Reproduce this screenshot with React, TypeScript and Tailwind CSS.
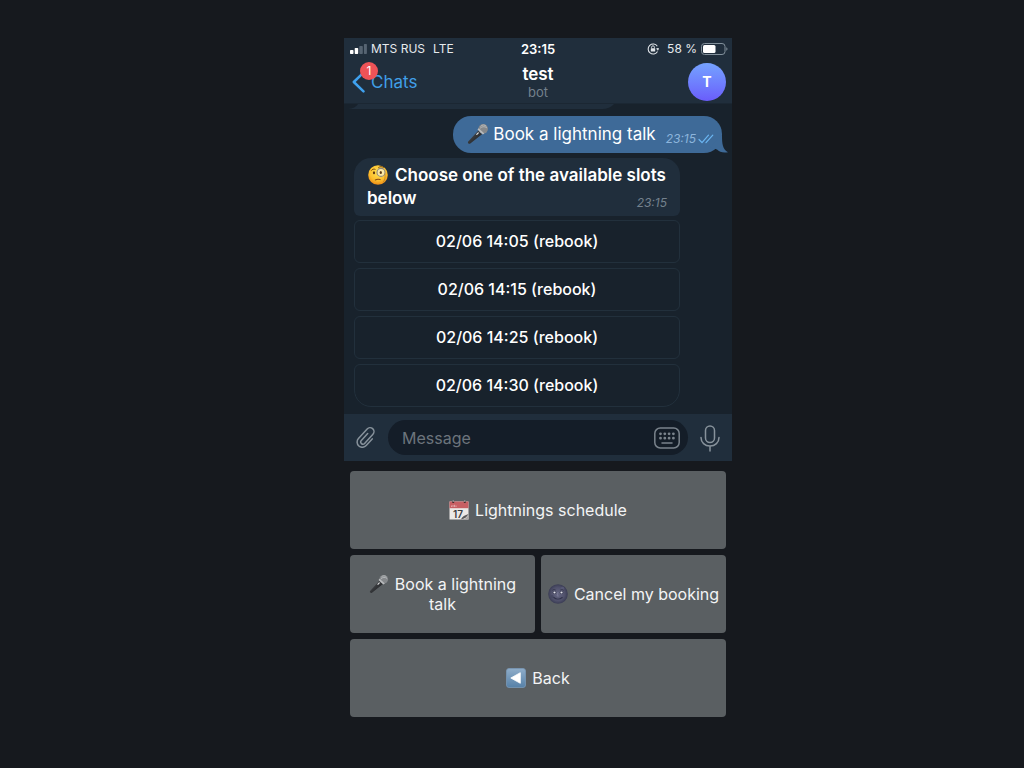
import React from 'react';

const slots = ['02/06 14:05', '02/06 14:15', '02/06 14:25', '02/06 14:30'];

function MicEmoji({ id, className }: { id: string; className: string }) {
  return (
    <svg viewBox="0 0 22 22" className={className} aria-hidden="true">
      <defs>
        <linearGradient id={id} x1="0" y1="0" x2="1" y2="1">
          <stop offset="0" stopColor="#6d7073" />
          <stop offset="0.45" stopColor="#36383b" />
          <stop offset="1" stopColor="#17191c" />
        </linearGradient>
      </defs>
      <path d="M11.400 7.400 1.200 18.600c-.5.6-.3 1.300.2 1.800s1.300.6 1.900.1L15 11.200z" fill={`url(#${id})`} />
      <circle cx="16.200" cy="5.800" r="4.800" fill="#85888b" />
      <path d="M13.500 3.500c1.500-2 4.500-2 5.800-.1M12.800 5.600c2-2.200 5-2.500 7.200-.6" stroke="#c3c5c7" strokeWidth="0.800" fill="none" />
      <path d="m11.600 5.200 5.800 5.200-1.500 1.100-5.400-4.900z" fill="#b9bbbd" />
      <path d="m9.800 11.300 1.500-1.500" stroke="#e4e5e6" strokeWidth="1.200" strokeLinecap="round" />
    </svg>
  );
}

function MonocleEmoji() {
  return (
    <svg viewBox="0 0 22 22" className="size-[22px] shrink-0" aria-hidden="true">
      <defs>
        <radialGradient id="face" cx="0.5" cy="0.35" r="0.65">
          <stop offset="0" stopColor="#ffe356" />
          <stop offset="0.65" stopColor="#fcc02e" />
          <stop offset="1" stopColor="#ec8b16" />
        </radialGradient>
      </defs>
      <circle cx="11" cy="11" r="9.800" fill="url(#face)" />
      <path d="M4.500 6.300c.8-1.200 2.200-1.500 3.600-1" stroke="#7c4a10" strokeWidth="1" fill="none" strokeLinecap="round" />
      <path d="M11.500 3.600c1.400-1.300 3.500-1.300 4.900-.2" stroke="#7c4a10" strokeWidth="1" fill="none" strokeLinecap="round" />
      <ellipse cx="7" cy="8.800" rx="1.100" ry="1.500" fill="#5c3510" />
      <circle cx="14" cy="8.400" r="4" fill="#fbe9a6" stroke="#8f8a80" strokeWidth="1.100" />
      <ellipse cx="13.800" cy="8.500" rx="1.100" ry="1.500" fill="#5c3510" />
      <path d="M17.900 9.500c.5 3.500.2 6-1.600 8.500" stroke="#b07c27" strokeWidth="0.700" fill="none" />
      <path d="M8.300 16c1.600-.9 3.300-.9 4.800-.4" stroke="#8a4e12" strokeWidth="1.100" fill="none" strokeLinecap="round" />
    </svg>
  );
}

function CalendarEmoji() {
  return (
    <svg viewBox="0 0 20 20" className="size-5 shrink-0" aria-hidden="true">
      <path d="M.5 1.500h19v18H.5z" fill="#ece9e6" />
      <path d="M.5 1.500h19v6.700H.5z" fill="#c75f63" />
      <path d="M2.500 7V5.500M4 7V5M5.500 7V4.800M7 7V5.500" stroke="#e7b5b6" strokeWidth="0.800" />
      <circle cx="4.200" cy="2" r="1.100" fill="#3a2426" />
      <circle cx="15.800" cy="2" r="1.100" fill="#3a2426" />
      <path d="M4.200.3V2M15.800.3V2" stroke="#bbb" strokeWidth="0.900" />
      <text x="9" y="17.500" textAnchor="middle" fontFamily="Inter, sans-serif" fontSize="10" fontWeight="600" fill="#3b3c3e">
        17
      </text>
      <path d="M13.500 19.500c3-.3 5-2.200 6-5.200v5.200z" fill="#a9a7a5" />
      <path d="M12 19.300c1-2.800 4-4 7.500-5.300-1.500 3.200-4 4.800-7.500 5.300z" fill="#595a5c" />
    </svg>
  );
}

function MoonEmoji() {
  return (
    <svg viewBox="0 0 20 20" className="size-5 shrink-0" aria-hidden="true">
      <defs>
        <radialGradient id="moon">
          <stop offset="0" stopColor="#666783" />
          <stop offset="0.7" stopColor="#4f506a" />
          <stop offset="1" stopColor="#3a3c54" />
        </radialGradient>
      </defs>
      <circle cx="10" cy="10" r="9.800" fill="url(#moon)" />
      <circle cx="14.500" cy="4.500" r="1.800" fill="#565874" />
      <circle cx="4" cy="12.500" r="1.600" fill="#464862" />
      <path d="M4.300 6.300c1-.9 2.300-.9 3.400-.2M12.300 6.100c1.100-.7 2.400-.7 3.400.2" stroke="#34364b" strokeWidth="0.900" fill="none" />
      <ellipse cx="6.500" cy="8.600" rx="1.800" ry="1.500" fill="#34364d" />
      <ellipse cx="13.500" cy="8.600" rx="1.800" ry="1.500" fill="#34364d" />
      <circle cx="6.500" cy="8.500" r="1.100" fill="#e8e8f0" />
      <circle cx="13.500" cy="8.500" r="1.100" fill="#e8e8f0" />
      <path d="m10 8-.9 4h1.800" stroke="#7b7c99" strokeWidth="0.800" fill="none" />
      <path d="M5.800 13.500c2.400 2 6 2 8.400 0" stroke="#30324a" strokeWidth="1.100" fill="none" strokeLinecap="round" />
    </svg>
  );
}

function BackEmoji() {
  return (
    <svg viewBox="0 0 20 20" className="size-5 shrink-0" aria-hidden="true">
      <defs>
        <linearGradient id="back" x1="0" y1="0" x2="0" y2="1">
          <stop offset="0" stopColor="#8fadc9" />
          <stop offset="1" stopColor="#5681a8" />
        </linearGradient>
      </defs>
      <rect x="0.500" y="0.500" width="19" height="19" rx="2.500" fill="url(#back)" stroke="#7898b6" strokeWidth="0.800" />
      <path d="M4.800 10 14.300 4.700v10.600z" fill="#fff" stroke="#fff" strokeWidth="0.800" strokeLinejoin="round" />
    </svg>
  );
}

function StatusBar() {
  return (
    <div className="grid h-[22px] grid-cols-[1fr_auto_1fr] items-center text-[12px] leading-5 text-[#e6eaed]">
      <div className="flex items-center gap-1 pl-1.5">
        <svg viewBox="0 0 17 10" className="h-2.5 w-[17px]" aria-hidden="true">
          <rect x="0" y="6" width="3.500" height="4" rx="0.700" fill="#fff" />
          <rect x="4.700" y="4" width="3.500" height="6" rx="0.700" fill="#fff" />
          <rect x="9.300" y="2" width="3.500" height="8" rx="0.700" fill="#566472" />
          <rect x="13.900" y="0" width="3" height="10" rx="0.700" fill="#566472" />
        </svg>
        <span>MTS RUS</span>
        <span className="ml-1">LTE</span>
      </div>
      <span className="text-[13px] font-semibold text-white">23:15</span>
      <div className="flex items-center justify-end pr-1">
        <svg viewBox="0 0 12 12" className="mr-2 size-3" fill="none" stroke="#dfe4e8" aria-hidden="true">
          <path d="M10.300 3.200a5 5 0 1 0 .2 5.300" strokeWidth="1.100" />
          <path d="m9.300 5.500 1.500 2 1.200-2z" fill="#dfe4e8" strokeWidth="0.300" />
          <path d="M10.800 6.200V5" strokeWidth="1" />
          <path d="M4.600 5.400V4.200a1.400 1.400 0 0 1 2.800 0v1.200" strokeWidth="0.900" />
          <rect x="3.800" y="5.200" width="4.400" height="3.400" rx="0.500" fill="#dfe4e8" stroke="none" />
        </svg>
        <span className="mr-1">58 %</span>
        <svg viewBox="0 0 27 12" className="h-3 w-[27px]" aria-hidden="true">
          <rect x="0.500" y="0.500" width="23.500" height="11" rx="3" fill="none" stroke="#82909b" />
          <rect x="2" y="2" width="12.500" height="8" rx="1.500" fill="#fff" />
          <path d="M25.300 4.200c1.600.6 1.600 3 0 3.600z" fill="#82909b" />
        </svg>
      </div>
    </div>
  );
}

function ChatHeader() {
  return (
    <div className="grid h-[43px] grid-cols-[1fr_auto_1fr] items-center px-1.5">
      <a href="#chats" className="relative flex items-center gap-1.5 justify-self-start pl-0.5 text-[17px] leading-6 text-[#409fe8]">
        <svg viewBox="0 0 13 22" className="h-[22px] w-[13px]" fill="none" aria-hidden="true">
          <path d="M11.500 1.700 1.800 11l9.700 9.300" stroke="#3fa1ee" strokeWidth="2.500" strokeLinecap="round" strokeLinejoin="round" />
        </svg>
        Chats
        <span className="absolute -top-2 left-2.5 flex size-[18px] items-center justify-center rounded-full bg-[#ee5357] text-[12px] text-white">
          1
        </span>
      </a>
      <div className="text-center">
        <h1 className="text-[17px] leading-5 font-semibold text-white">test</h1>
        <p className="text-[13px] leading-4 text-[#74818d]">bot</p>
      </div>
      <div className="flex size-[38px] items-center justify-center justify-self-end rounded-full bg-linear-to-b from-[#75a2ff] to-[#6a5cfb] text-[14px] font-bold text-white">
        T
      </div>
    </div>
  );
}

function MessageInput() {
  return (
    <div className="flex h-[47px] items-center gap-2.5 bg-[#202e3c] px-2.5">
      <button type="button" aria-label="Attach">
        <svg viewBox="-12 -13 24 26" className="h-[26px] w-6" fill="none" stroke="#87929b" strokeWidth="1.500" strokeLinecap="round" aria-hidden="true">
          <path
            d="M5.200-3.500v9a5.200 5.200 0 0 1-10.400 0v-13a3.900 3.900 0 0 1 7.800 0V5a2.200 2.200 0 0 1-4.400 0v-9.500"
            transform="rotate(42)"
          />
        </svg>
      </button>
      <div className="flex h-[35px] min-w-0 flex-1 items-center rounded-full bg-[#141d28] pr-2 pl-3.5">
        <input
          type="text"
          aria-label="Message"
          placeholder="Message"
          className="min-w-0 flex-1 bg-transparent text-[16px] leading-6 text-white outline-none placeholder:text-[#6c747c]"
        />
        <button type="button" aria-label="Keyboard">
          <svg viewBox="0 0 26 22" className="h-[22px] w-[26px]" fill="none" stroke="#7a838c" strokeWidth="1.500" strokeLinecap="round" aria-hidden="true">
            <rect x="0.800" y="1" width="24.400" height="20" rx="5.500" />
            <path d="M6.500 6.800h.01M10.800 6.800h.01M15.100 6.800h.01M19.400 6.800h.01M6.500 11.200h.01M10.800 11.200h.01M15.100 11.200h.01M19.400 11.200h.01" strokeWidth="2.800" />
            <path d="M8 16h10" />
          </svg>
        </button>
      </div>
      <button type="button" aria-label="Record voice message">
        <svg viewBox="0 0 24 28" className="h-7 w-6" fill="none" stroke="#87929b" strokeWidth="1.500" strokeLinecap="round" aria-hidden="true">
          <rect x="7.500" y="2" width="9" height="16.500" rx="4.500" />
          <path d="M3 13.500c0 5 3.800 8.500 9 8.500s9-3.500 9-8.500M12 22v5" />
        </svg>
      </button>
    </div>
  );
}

function Key({ children }: { children: React.ReactNode }) {
  return (
    <button
      type="button"
      className="flex h-[78px] min-w-0 flex-1 items-center justify-center gap-1.5 rounded bg-[#5a5f62] text-[16px] leading-5 text-[#f3f4f5]"
    >
      {children}
    </button>
  );
}

export default function App() {
  return (
    <main className="flex min-h-screen justify-center bg-[#16191e] pt-[38px] pb-8 pl-[52px] font-['Inter',sans-serif]">
      <div className="w-full max-w-[388px]">
        <header className="border-b border-[#1b2733] bg-[#202e3c]">
          <StatusBar />
          <ChatHeader />
        </header>

        <section className="flex flex-col bg-[#18222c] pb-[7px]">
          {/* Bottom edge of the previous message */}
          <svg viewBox="0 0 266 5" className="ml-1 h-[5px] w-[266px]" aria-hidden="true">
            <path d="M0 5c5-.5 8-2 10-5h256c-3 3.500-7 5-12 5z" fill="#202e3c" />
          </svg>

          <div className="relative mt-[7px] mr-2.5 flex h-[37px] items-center self-end rounded-[18px] bg-[#3e6a98] pr-2 pb-0.5 pl-3.5 text-white">
            <svg viewBox="0 0 20 18" className="absolute -right-1.5 bottom-0 h-[18px] w-5" fill="#3e6a98" aria-hidden="true">
              <path d="M14 0c0 9 .5 14 6 17.200-5 1-8.500-.2-11-2.700L2 12z" />
            </svg>
            <MicEmoji id="mic-message" className="size-[22px] shrink-0" />
            <p className="ml-1 text-[17px] leading-6">Book a lightning talk</p>
            <span className="relative mt-2.5 ml-2.5 text-[12px] leading-4 text-[#8db5dc] italic">23:15</span>
            <svg viewBox="0 0 16 10" className="relative mt-2.5 ml-0.5 h-2.5 w-4" fill="none" stroke="#6bb6f2" strokeWidth="1.200" strokeLinecap="round" strokeLinejoin="round" aria-hidden="true">
              <path d="m1 5.500 3 3.200 6.500-7.500M8 8.700l6.800-7.500" />
            </svg>
          </div>

          <div className="mt-[5px] mr-[52px] ml-2.5 rounded-t-[17px] rounded-b-md bg-[#202e3c] px-[13px] pt-1.5 pb-[5px]">
            <p className="text-[17px] leading-[23px] font-semibold text-white">
              <span className="mr-1.5 inline-block align-top">
                <MonocleEmoji />
              </span>
              Choose one of the available slots <span>below</span>
              <span className="float-right mt-2 text-[12px] leading-4 font-normal text-[#74818d] italic">23:15</span>
            </p>
          </div>

          <div className="mt-1 mr-[52px] ml-2.5 flex flex-col gap-[5px]">
            {slots.map((slot) => (
              <button
                key={slot}
                type="button"
                className="h-[43px] rounded-md border border-[#22303c] pb-0.5 text-[16px] leading-6 font-medium text-white last:rounded-b-[17px]"
              >
                {slot} (rebook)
              </button>
            ))}
          </div>
        </section>

        <MessageInput />

        <div className="flex flex-col gap-1.5 px-1.5 pt-2.5">
          <div className="flex">
            <Key>
              <CalendarEmoji />
              <span>Lightnings schedule</span>
            </Key>
          </div>
          <div className="flex gap-1.5">
            <Key>
              <span className="px-3">
                <span className="mr-1.5 inline-block align-top">
                  <MicEmoji id="mic-key" className="size-5" />
                </span>
                Book a lightning talk
              </span>
            </Key>
            <Key>
              <MoonEmoji />
              <span className="whitespace-nowrap">Cancel my booking</span>
            </Key>
          </div>
          <div className="flex">
            <Key>
              <BackEmoji />
              <span>Back</span>
            </Key>
          </div>
        </div>
      </div>
    </main>
  );
}
